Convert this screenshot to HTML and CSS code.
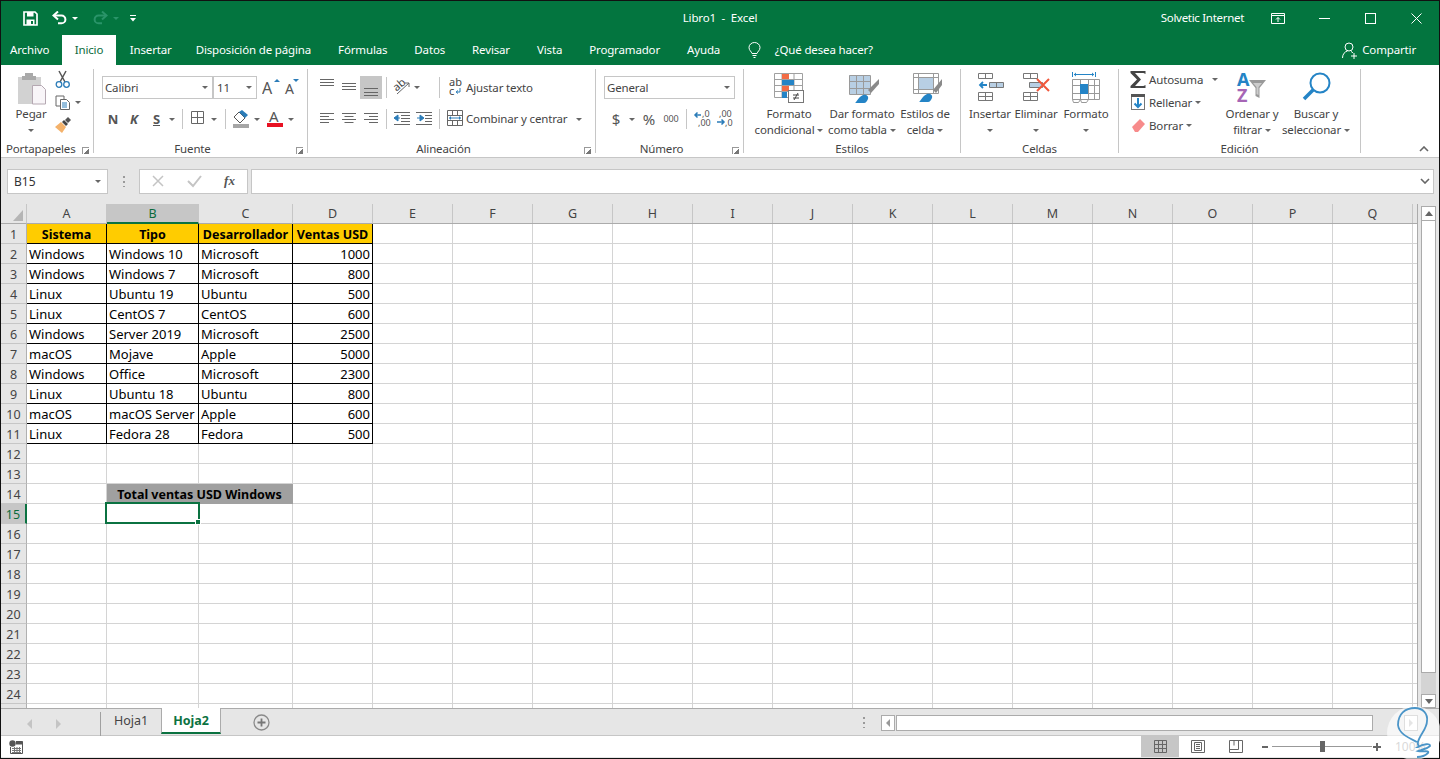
FILE: index.html
```html
<!DOCTYPE html>
<html lang="es">
<head>
<meta charset="utf-8">
<title>Libro1 - Excel</title>
<link rel="stylesheet" href="styles.css">
</head>
<body>
<div class="app">
  <header class="titlebar">
    <div class="qat">
      <svg width="15" height="15" viewBox="0 0 15 15"><path d="M1 1h11l2 2v11H1z" fill="none" stroke="#fff" stroke-width="1.7"/><rect x="4" y="1" width="6.5" height="4.5" fill="#fff"/><rect x="3.5" y="8.5" width="8" height="5.5" fill="#fff"/><rect x="8" y="10" width="2" height="3" fill="#03753f"/></svg>
      <svg class="q-undo" width="15" height="14" viewBox="0 0 15 14"><path d="M3 4.500h6.500a3.800 3.800 0 0 1 0 7.800H6" fill="none" stroke="#fff" stroke-width="2"/><path d="M6 .5 1.500 4.500 6 8.500" fill="none" stroke="#fff" stroke-width="2"/></svg>
      <i class="q-caret"></i>
      <svg class="q-redo" width="15" height="14" viewBox="0 0 15 14"><path d="M12 4.500H5.500a3.800 3.800 0 0 0 0 7.800H9" fill="none" stroke="#2a9469" stroke-width="2"/><path d="M9 .5l4.500 4-4.500 4" fill="none" stroke="#2a9469" stroke-width="2"/></svg>
      <i class="q-caret dim"></i>
      <svg class="q-more" width="6" height="7" viewBox="0 0 6 7"><rect width="6" height="1" fill="#fff"/><path d="M0 3h6L3 6.500z" fill="#fff"/></svg>
    </div>
    <div class="doc-title">Libro1 &nbsp;-&nbsp; Excel</div>
    <div class="win">
      <span class="user">Solvetic Internet</span>
      <span class="wb"><svg width="14" height="11" viewBox="0 0 14 11"><path d="M.5 2.500h13v8H.5zM.5.500h13v2H.5zM7 9V4.500M5 6.500l2-2 2 2" fill="none" stroke="#fff"/></svg></span>
      <span class="wb"><svg width="11" height="11" viewBox="0 0 11 11"><path d="M0 5.500h11" stroke="#fff"/></svg></span>
      <span class="wb"><svg width="11" height="11" viewBox="0 0 11 11"><rect x=".5" y=".5" width="10" height="10" fill="none" stroke="#fff"/></svg></span>
      <span class="wb"><svg width="11" height="11" viewBox="0 0 11 11"><path d="M.5.500l10 10M10.500.500l-10 10" stroke="#fff"/></svg></span>
    </div>
  </header>

  <nav class="tabs">
    <span class="tab first">Archivo</span>
    <span class="tab active">Inicio</span>
    <span class="tab">Insertar</span>
    <span class="tab">Disposición de página</span>
    <span class="tab">Fórmulas</span>
    <span class="tab">Datos</span>
    <span class="tab">Revisar</span>
    <span class="tab">Vista</span>
    <span class="tab">Programador</span>
    <span class="tab">Ayuda</span>
    <span class="tell">
      <svg width="13" height="16" viewBox="0 0 13 16"><path d="M4 11.500C3.500 9.500 1 8.500 1 5.500a5.500 5 0 0 1 11 0c0 3-2.500 4-3 6zM4.500 13.500h4M5.500 15.500h2" fill="none" stroke="#fff"/></svg>
      <span>¿Qué desea hacer?</span>
    </span>
    <span class="share">
      <svg width="16" height="17" viewBox="0 0 16 17"><circle cx="7" cy="5" r="4" fill="none" stroke="#fff"/><path d="M.5 16c0-4 2.500-6.500 5-7M9 9.500c.8.300 1.500.8 2 1.500M12 11v6M9 14h6" fill="none" stroke="#fff"/></svg>
      <span>Compartir</span>
    </span>
  </nav>

  <section class="ribbon">
    <div class="group g-clip">
      <div class="body row-body">
        <div class="big w-paste">
          <svg width="30" height="37" viewBox="0 0 30 37"><path d="M2 8h23v27H2z" fill="#d2d2d2"/><path d="M9 7V4h8v3h3v4H6V7z" fill="#a9a9a9"/><path d="M16.500 16.500h9l4 4v14.500h-13z" fill="#f8f5f8" stroke="#b5a8b2"/></svg>
          <span>Pegar</span>
          <i class="caret-solo"></i>
        </div>
        <div class="clip-tools">
          <svg width="18" height="18" viewBox="0 0 18 18"><path d="M5 1l6 11M12 1L6 12" stroke="#555" stroke-width="1.500" fill="none"/><circle cx="5" cy="14.500" r="2.800" fill="none" stroke="#2b7cb8" stroke-width="1.300"/><circle cx="12.500" cy="14.500" r="2.800" fill="none" stroke="#2b7cb8" stroke-width="1.300"/></svg>
          <span class="inline">
            <svg width="18" height="18" viewBox="0 0 18 18"><path d="M2 3h8v10H2z" fill="#fff" stroke="#666"/><path d="M6.500 6.500h6l3 3v7h-9z" fill="#fff" stroke="#666"/><path d="M8 10h5M8 12h5M8 14h5" stroke="#2b7cb8"/></svg>
            <i class="car c-copy"></i>
          </span>
          <svg width="18" height="18" viewBox="0 0 18 18"><path d="M10 4l4 4-2 2-4-4z" fill="#444"/><path d="M14 1l3 3-3 3-3-3z" fill="#555"/><path d="M7 6l5 5-4 6-7-6z" fill="#f4b26b"/></svg>
        </div>
      </div>
      <div class="label">Portapapeles<i class="launch"></i></div>
    </div>

    <div class="group g-font">
      <div class="body">
        <div class="r1">
          <span class="combo c-fname">Calibri<i class="car"></i></span>
          <span class="combo c-fsize">11<i class="car"></i></span>
          <svg class="grow" width="22" height="23" viewBox="0 0 22 23"><text x="0" y="18" class="svg-a">A</text><path d="M12 6l3-3 3 3z" fill="#2b7cb8"/></svg>
          <svg width="18" height="23" viewBox="0 0 18 23"><text x="1" y="18" class="svg-a small">A</text><path d="M9 3h6l-3 3z" fill="#2b7cb8"/></svg>
        </div>
        <div class="r2">
          <b class="fmt f-n">N</b><b class="fmt f-k">K</b><b class="fmt f-s">S</b><i class="car"></i>
          <i class="sep s-6"></i>
          <svg width="27" height="20" viewBox="0 0 27 20"><path d="M8.500 2.500h12v12h-12zM14.500 2.500v12M8.500 8.500h12" fill="none" stroke="#666"/></svg><i class="car"></i>
          <i class="sep s-7"></i>
          <svg width="27" height="20" viewBox="0 0 27 20"><path d="M8 8l5-5 6 6-5 5z" fill="#fff" stroke="#555"/><path d="M13 3l3-2 6 5-3 3z" fill="#2b7cb8"/><rect x="7" y="15" width="16" height="4" fill="#a6a6a6"/></svg><i class="car"></i>
          <svg width="26" height="20" viewBox="0 0 26 20"><text x="8" y="13" class="svg-a mid">A</text><rect x="6" y="14" width="16" height="4" fill="#e81123"/></svg><i class="car"></i>
        </div>
      </div>
      <div class="label launched">Fuente<i class="launch"></i></div>
    </div>

    <div class="group g-align">
      <div class="body">
        <div class="r1">
          <svg width="22" height="23" viewBox="0 0 22 23"><path d="M4 3.500h14M4 6.500h14M4 9.500h14" stroke="#666"/></svg>
          <svg width="22" height="23" viewBox="0 0 22 23"><path d="M4 7.500h14M4 10.500h14M4 13.500h14" stroke="#666"/></svg>
          <svg class="on" width="22" height="23" viewBox="0 0 22 23"><path d="M4 12.500h14M4 16.500h14M4 19.500h14" stroke="#666"/></svg>
          <i class="sep s-4 tall"></i>
          <svg width="26" height="23" viewBox="0 0 26 23"><text x="7" y="13" class="svg-ab" transform="rotate(-40 12 11)">ab</text><path d="M10 18L22 7M18 7h4v4" fill="none" stroke="#666"/></svg><i class="car"></i>
          <i class="sep s-18 tall"></i>
          <svg width="26" height="23" viewBox="0 0 26 23"><text x="9" y="10" class="svg-ab">ab</text><text x="9" y="19" class="svg-ab">c</text><path d="M20 12v4h-3M18 14.500l-2 1.500 2 1.500" fill="none" stroke="#2b7cb8"/></svg>
          <span class="txt">Ajustar texto</span>
        </div>
        <div class="r2">
          <svg width="22" height="20" viewBox="0 0 22 20"><path d="M4 4.500h14M4 7.500h9M4 10.500h14M4 13.500h9" stroke="#666"/></svg>
          <svg width="22" height="20" viewBox="0 0 22 20"><path d="M4 4.500h14M6.500 7.500h9M4 10.500h14M6.500 13.500h9" stroke="#666"/></svg>
          <svg width="22" height="20" viewBox="0 0 22 20"><path d="M4 4.500h14M9 7.500h9M4 10.500h14M9 13.500h9" stroke="#666"/></svg>
          <i class="sep s-4"></i>
          <svg width="29" height="20" viewBox="0 0 29 20"><path d="M7 3.500h16M14 6.500h9M14 9.500h9M14 12.500h9M7 15.500h16" stroke="#666"/><path d="M13 9H9M11 6L7 9l4 3z" fill="#2b7cb8" stroke="#2b7cb8"/></svg>
          <svg width="23" height="20" viewBox="0 0 23 20"><path d="M0 3.500h16M9 6.500h7M9 9.500h7M9 12.500h7M0 15.500h16" stroke="#666"/><path d="M1 9h4M4 6l4 3-4 3z" fill="#2b7cb8" stroke="#2b7cb8"/></svg>
          <i class="sep"></i>
          <svg width="26" height="20" viewBox="0 0 26 20"><path d="M7.500 1.500h15v15h-15zM7.500 6.500h15M7.500 11.500h15M12.500 1.500v5M17.500 1.500v5M12.500 11.500v5M17.500 11.500v5" fill="none" stroke="#666"/><path d="M9.500 9h11" stroke="#2b7cb8"/><path d="M9 9l2-2v4zM21 9l-2-2v4z" fill="#2b7cb8"/></svg>
          <span class="txt">Combinar y centrar</span><i class="car c-merge"></i>
        </div>
      </div>
      <div class="label launched">Alineación<i class="launch"></i></div>
    </div>

    <div class="group g-num">
      <div class="body">
        <div class="r1"><span class="combo c-general">General<i class="car"></i></span></div>
        <div class="r2">
          <span class="n-sym dollar">$</span><i class="car c-dollar"></i>
          <span class="n-sym pct">%</span>
          <span class="n-sym thou">000</span>
          <i class="sep s-6"></i>
          <svg width="29" height="20" viewBox="0 0 29 20"><path d="M14 6H8M10.500 3.500L8 6l2.500 2.500" fill="none" stroke="#2b7cb8" stroke-width="1.500"/><text x="15" y="8" class="svg-num">,0</text><text x="11" y="17" class="svg-num">,00</text></svg>
          <svg width="22" height="20" viewBox="0 0 22 20"><text x="3" y="8" class="svg-num">,00</text><path d="M1 13h7M5.500 10.500L8 13l-2.500 2.500" fill="none" stroke="#2b7cb8" stroke-width="1.500"/><text x="9" y="17" class="svg-num">,0</text></svg>
        </div>
      </div>
      <div class="label launched">Número<i class="launch"></i></div>
    </div>

    <div class="group g-styles">
      <div class="body row-body">
        <div class="big w-cond">
          <svg width="32" height="37" viewBox="0 0 32 37"><path d="M1.500 4.500h28v24h-28zM9 4.500v24M21 4.500v24M1.500 10.500h28M1.500 16.500h28M1.500 22.500h28" fill="none" stroke="#a0a0a0"/><rect x="9" y="5" width="7" height="5" fill="#f36c45"/><rect x="9" y="11" width="12" height="5" fill="#2484c6"/><rect x="9" y="17" width="7" height="5" fill="#f36c45"/><rect x="9" y="23" width="5" height="6" fill="#2484c6"/><rect x="15.500" y="21.500" width="15" height="12" fill="#fff" stroke="#777"/><path d="M20 26h6M20 29h6M25 24l-4 7" stroke="#444" fill="none"/></svg>
          <span>Formato</span><span>condicional<i class="tri"></i></span>
        </div>
        <div class="big w-table">
          <svg width="36" height="37" viewBox="-2 0 36 37"><rect x="3" y="6" width="21" height="19" fill="#b8cfe4"/><path d="M3.500 6.500h21v19h-21zM10.500 6.500v19M17.500 6.500v19M3.500 12.500h21M3.500 19.500h21" fill="none" stroke="#9a9a9a"/><path d="M33 10l-11 11 3 3 8-9z" fill="#8a8a8a"/><path d="M9 34c2-1 3-6 8-8 3-1 6 1 5 4-1 2-2 4-4 4z" fill="#2484c6"/></svg>
          <span>Dar formato</span><span>como tabla<i class="tri"></i></span>
        </div>
        <div class="big w-cell">
          <svg width="34" height="37" viewBox="-2 0 34 37"><path d="M3.500 4.500h25v20h-25z" fill="#fff" stroke="#9a9a9a"/><rect x="8" y="9" width="15" height="11" fill="#b8cfe4"/><path d="M8.500 4.500v20M23.500 4.500v20M3.500 8.500h25M3.500 20.500h25" fill="none" stroke="#9a9a9a"/><path d="M32 10l-9 11 3 3 6-8z" fill="#8a8a8a"/><path d="M9 33c2-1 3-6 8-8 3-1 6 1 5 4-1 2-2 4-4 4z" fill="#2484c6"/></svg>
          <span>Estilos de</span><span>celda<i class="tri"></i></span>
        </div>
      </div>
      <div class="label">Estilos</div>
    </div>

    <div class="group g-cells">
      <div class="body row-body">
        <div class="big w-ins">
          <svg width="30" height="37" viewBox="0 0 30 37"><path d="M3.500 4.500h14v5h-14zM10.500 4.500v5M3.500 23.500h14v8h-14zM10.500 23.500v8M3.500 27.500h14" fill="none" stroke="#777"/><path d="M14.500 13.500h14v5h-14zM21.500 13.500v5" fill="#b8cfe4" stroke="#777"/><path d="M12 16H5M8 13l-3 3 3 3" fill="none" stroke="#2484c6" stroke-width="1.800"/></svg>
          <span>Insertar</span><i class="caret-solo"></i>
        </div>
        <div class="big w-del">
          <svg width="34" height="37" viewBox="-2 0 34 37"><path d="M2.500 4.500h14v5h-14zM9.500 4.500v5M2.500 23.500h14v8h-14zM9.500 23.500v8M2.500 27.500h14" fill="none" stroke="#777"/><path d="M8.500 13.500h13v5h-13z" fill="#b8cfe4" stroke="#777"/><path d="M16 10l12 12M28 10L16 22" stroke="#f0583c" stroke-width="2"/></svg>
          <span>Eliminar</span><i class="caret-solo"></i>
        </div>
        <div class="big w-fmt">
          <svg width="30" height="37" viewBox="0 0 30 37"><path d="M1.500 3v5M24.500 3v5M3 5.500h20" stroke="#2484c6" fill="none"/><path d="M3 5.500l2-2v4zM23 5.500l-2-2v4z" fill="#2484c6"/><path d="M1.500 10.500h27v20h-27zM9.500 10.500v20M17.500 10.500v20M23.500 10.500v20M1.500 16.500h27M1.500 24.500h27" fill="none" stroke="#999"/><rect x="9" y="15" width="8" height="10" fill="#2484c6"/><path d="M1.500 30.500l1 3h5l2-3M9.500 30.500l1 3h5l2-3" fill="none" stroke="#999"/></svg>
          <span>Formato</span><i class="caret-solo"></i>
        </div>
      </div>
      <div class="label">Celdas</div>
    </div>

    <div class="group g-edit">
      <div class="body row-body">
        <div class="edit-list">
          <div class="edit-item">
            <svg width="19" height="23" viewBox="0 0 19 23"><path d="M.5 3h15v3L13.500 5H5l6 6.500L5 18h8.500l2-1v3H.5v-2l6.500-6.500L.5 5z" fill="#444"/></svg>
            <span>Autosuma</span><i class="tri tri-auto"></i>
          </div>
          <div class="edit-item">
            <svg width="19" height="23" viewBox="0 0 19 23"><rect x="1.500" y="3.500" width="13" height="15" fill="#fff" stroke="#777"/><rect x="1" y="3" width="14" height="3" fill="#555"/><path d="M8 7v9M4.500 12.500L8 16l3.500-3.500" fill="none" stroke="#2484c6" stroke-width="2"/></svg>
            <span>Rellenar</span><i class="tri"></i>
          </div>
          <div class="edit-item">
            <svg width="19" height="23" viewBox="0 0 19 23"><path d="M2 13l8-8 5 5-7 8H5z" fill="#f78b8b"/></svg>
            <span>Borrar</span><i class="tri"></i>
          </div>
        </div>
        <div class="big w-sort">
          <svg width="34" height="37" viewBox="0 0 34 37"><text x="2" y="17" class="svg-sort az">A</text><text x="2" y="33" class="svg-sort zz">Z</text><path d="M14 11h17l-6.500 8v10l-4-2v-8z" fill="#999"/><path d="M18 14h9l-3.500 4v8l-2-1v-7z" fill="#ccc"/></svg>
          <span>Ordenar y</span><span>filtrar<i class="tri"></i></span>
        </div>
        <div class="big w-find">
          <svg width="32" height="37" viewBox="0 0 32 37"><circle cx="20" cy="14" r="9.500" fill="none" stroke="#2484c6" stroke-width="2"/><path d="M13 21l-9 9" stroke="#2484c6" stroke-width="3.500"/></svg>
          <span>Buscar y</span><span>seleccionar<i class="tri"></i></span>
        </div>
      </div>
      <div class="label">Edición</div>
    </div>

    <svg class="collapse" width="10" height="6" viewBox="0 0 10 6"><path d="M1 5l4-4 4 4" fill="none" stroke="#666" stroke-width="1.600"/></svg>
  </section>

  <section class="fbar">
    <span class="namebox">B15<i class="car c-name"></i></span>
    <span class="dots"></span>
    <span class="fbtns">
      <svg width="36" height="22" viewBox="0 0 36 22"><path d="M13 6l10 10M23 6L13 16" stroke="#c4c4c4" stroke-width="1.500"/></svg>
      <svg width="36" height="22" viewBox="0 0 36 22"><path d="M12 11l5 5 8-10" fill="none" stroke="#c4c4c4" stroke-width="2"/></svg>
      <span class="fx">fx</span>
    </span>
    <span class="finput"><svg width="10" height="6" viewBox="0 0 10 6"><path d="M1 1l4 4 4-4" fill="none" stroke="#666" stroke-width="1.600"/></svg></span>
  </section>

  <section class="sheet">
    <div class="grid-wrap">
      <table class="grid">
        <colgroup><col class="c-rh"><col class="c-a"><col class="c-b"><col class="c-c"><col class="c-d"><col class="c-rest"></colgroup>
        <thead>
          <tr><th class="corner"><i></i></th><th>A</th><th class="sel">B</th><th>C</th><th>D</th><th class="head-rest"><span>E</span><span>F</span><span>G</span><span>H</span><span>I</span><span>J</span><span>K</span><span>L</span><span>M</span><span>N</span><span>O</span><span>P</span><span>Q</span><span class="stub"></span></th></tr>
        </thead>
        <tbody>
          <tr class="hd"><th>1</th><td>Sistema</td><td>Tipo</td><td>Desarrollador</td><td>Ventas USD</td><td class="rest"></td></tr>
          <tr class="bx"><th>2</th><td>Windows</td><td>Windows 10</td><td>Microsoft</td><td class="num">1000</td><td class="rest"></td></tr>
          <tr class="bx"><th>3</th><td>Windows</td><td>Windows 7</td><td>Microsoft</td><td class="num">800</td><td class="rest"></td></tr>
          <tr class="bx"><th>4</th><td>Linux</td><td>Ubuntu 19</td><td>Ubuntu</td><td class="num">500</td><td class="rest"></td></tr>
          <tr class="bx"><th>5</th><td>Linux</td><td>CentOS 7</td><td>CentOS</td><td class="num">600</td><td class="rest"></td></tr>
          <tr class="bx"><th>6</th><td>Windows</td><td>Server 2019</td><td>Microsoft</td><td class="num">2500</td><td class="rest"></td></tr>
          <tr class="bx"><th>7</th><td>macOS</td><td>Mojave</td><td>Apple</td><td class="num">5000</td><td class="rest"></td></tr>
          <tr class="bx"><th>8</th><td>Windows</td><td>Office</td><td>Microsoft</td><td class="num">2300</td><td class="rest"></td></tr>
          <tr class="bx"><th>9</th><td>Linux</td><td>Ubuntu 18</td><td>Ubuntu</td><td class="num">800</td><td class="rest"></td></tr>
          <tr class="bx"><th>10</th><td>macOS</td><td>macOS Server</td><td>Apple</td><td class="num">600</td><td class="rest"></td></tr>
          <tr class="bx"><th>11</th><td>Linux</td><td>Fedora 28</td><td>Fedora</td><td class="num">500</td><td class="rest"></td></tr>
          <tr><th>12</th><td></td><td></td><td></td><td></td><td class="rest"></td></tr>
          <tr><th>13</th><td></td><td></td><td></td><td></td><td class="rest"></td></tr>
          <tr><th>14</th><td></td><td class="total" colspan="2">Total ventas USD Windows</td><td></td><td class="rest"></td></tr>
          <tr class="cur"><th>15</th><td></td><td class="active-cell"><i class="selbox"></i></td><td></td><td></td><td class="rest"></td></tr>
          <tr><th>16</th><td></td><td></td><td></td><td></td><td class="rest"></td></tr>
          <tr><th>17</th><td></td><td></td><td></td><td></td><td class="rest"></td></tr>
          <tr><th>18</th><td></td><td></td><td></td><td></td><td class="rest"></td></tr>
          <tr><th>19</th><td></td><td></td><td></td><td></td><td class="rest"></td></tr>
          <tr><th>20</th><td></td><td></td><td></td><td></td><td class="rest"></td></tr>
          <tr><th>21</th><td></td><td></td><td></td><td></td><td class="rest"></td></tr>
          <tr><th>22</th><td></td><td></td><td></td><td></td><td class="rest"></td></tr>
          <tr><th>23</th><td></td><td></td><td></td><td></td><td class="rest"></td></tr>
          <tr><th>24</th><td></td><td></td><td></td><td></td><td class="rest"></td></tr>
          <tr><th></th><td></td><td></td><td></td><td></td><td class="rest"></td></tr>
        </tbody>
      </table>
    </div>
    <div class="vscroll">
      <span class="vbtn up"></span>
      <span class="vthumb"></span>
      <span class="vtrack"></span>
      <span class="vbtn down"></span>
    </div>
  </section>

  <section class="sheetbar">
    <div class="navs"><i class="nav-l"></i><i class="nav-r"></i></div>
    <span class="stab">Hoja1</span>
    <span class="stab on">Hoja2</span>
    <svg class="addsheet" width="17" height="17" viewBox="0 0 17 17"><circle cx="8.500" cy="8.500" r="7.500" fill="none" stroke="#8a8a8a" stroke-width="1.300"/><path d="M8.500 4.500v8M4.500 8.500h8" stroke="#777" stroke-width="1.800"/></svg>
    <div class="hzone">
      <span class="hdots"></span>
      <span class="hbtn"><i class="nav-l dark"></i></span>
      <span class="hthumb"></span>
      <span class="htrack"></span>
      <span class="hbtn"><i class="nav-r dark"></i></span>
    </div>
  </section>

  <footer class="status">
    <svg class="macro" width="14" height="14" viewBox="0 0 14 14"><circle cx="3.500" cy="3.500" r="3.200" fill="#555"/><path d="M7 1.500h6.500v12H1.500V7" fill="none" stroke="#555"/><path d="M7 1.500h6.500v3H7z" fill="#555"/><path d="M3 8.500h9M3 10.500h9M3 12.500h9M5.500 7v6M8 7v6M10.500 7v6" stroke="#777"/></svg>
    <div class="views">
      <span class="view on"><svg width="13" height="13" viewBox="0 0 13 13"><path d="M.5.500h12v12H.5zM4.500.500v12M8.500.500v12M.5 4.500h12M.5 8.500h12" fill="none" stroke="#666"/></svg></span>
      <span class="view"><svg width="14" height="13" viewBox="0 0 14 13"><path d="M.5.500h13v12H.5z" fill="none" stroke="#666"/><path d="M3.500 2.500h7v8h-7zM5 4.500h4M5 6.500h4M5 8.500h4" fill="none" stroke="#666"/></svg></span>
      <span class="view"><svg width="14" height="13" viewBox="0 0 14 13"><path d="M.5.500h13v12H.5zM.5 9.500h9v-9M5 .5v5" fill="none" stroke="#666"/></svg></span>
    </div>
    <div class="zoomer">
      <i class="zm"></i>
      <span class="slider"><i></i></span>
      <i class="zp"></i>
      <span class="pct-z">100%</span>
    </div>
  </footer>

  <svg class="logo" width="54" height="54" viewBox="0 0 54 54"><circle cx="27" cy="27" r="27" fill="#fff" fill-opacity=".62"/><path d="M30 36C22 32 12 28 11 19 11 8 18 2 28 2c8 0 13 6 12 13 0 8-7 13-9 21-1 3 2 5 0 5 5-3 13-4 12-1-3 3-10 4-12 5 5 1 12-1 10 2-3 3-7 4-11 4" fill="none" stroke="#4b95c8" stroke-width="1.800"/></svg>
</div>
</body>
</html>
```
FILE: styles.css
```css
* { box-sizing: border-box; }
html, body { margin: 0; padding: 0; }
body { width: 1440px; height: 759px; overflow: hidden; background: #000; font-family: "Noto Sans", "Open Sans", sans-serif; color: #444; }
i { font-style: normal; display: block; }
svg { display: block; flex: none; }
text { font-family: "Noto Sans", sans-serif; letter-spacing: 0; }

.app { position: relative; width: 1440px; height: 759px; padding: 1px; background: #e6e6e6; display: flex; flex-direction: column; overflow: hidden; box-shadow: inset 0 0 0 1px #111; }

/* title bar */
.titlebar { height: 34px; flex: none; background: #03753f; color: #fff; display: grid; grid-template-columns: 1fr auto 1fr; align-items: center; font-size: 11.5px; letter-spacing: -.15px; }
.qat { display: flex; align-items: center; padding-left: 22px; }
.q-undo { margin-left: 14px; }
.q-caret { width: 0; height: 0; border: 3px solid transparent; border-top-color: #fff; border-bottom: 0; margin-left: 5px; }
.q-caret.dim { border-top-color: #2a9469; margin-left: 5px; }
.q-redo { margin-left: 15px; }
.q-more { margin-left: 11px; }
.doc-title { text-align: center; padding-bottom: 2px; }
.win { display: flex; justify-content: flex-end; align-items: center; }
.user { margin-right: 11px; letter-spacing: -.3px; padding-bottom: 2px; }
.wb { width: 46px; display: flex; justify-content: center; }

/* tabs */
.tabs { height: 30px; flex: none; background: #03753f; color: #fff; display: flex; font-size: 11.5px; letter-spacing: -.15px; line-height: 30px; }
.tab { padding: 0 13.5px; white-space: nowrap; }
.tab.first { padding: 0 13px 0 9px; }
.tab.active { background: #fff; color: #0b6b3c; padding: 0 12.5px; }
.tab.active + .tab { padding-left: 14px; padding-right: 10.5px; }
.tell { display: flex; align-items: center; gap: 14px; margin-left: 14px; }
.share { display: flex; align-items: center; gap: 4px; margin-left: auto; margin-right: 23px; }

/* ribbon */
.ribbon { position: relative; height: 93px; flex: none; background: #fff; border-bottom: 1px solid #c6c6c6; display: flex; padding-top: 4px; font-size: 11.5px; letter-spacing: -.15px; line-height: 16px; }
.group { height: 84px; flex: none; border-right: 1px solid #c6c6c6; display: flex; flex-direction: column; }
.g-clip { width: 93px; } .g-font { width: 214px; } .g-align { width: 288px; } .g-num { width: 148px; } .g-styles { width: 217px; } .g-cells { width: 158px; } .g-edit { width: 242px; }
.body { height: 72px; flex: none; padding-top: 7px; }
.row-body { display: flex; padding-top: 0; }
.label { position: relative; height: 12px; line-height: 16px; text-align: center; white-space: nowrap; }
.label.launched { padding-right: 16px; }
.launch { position: absolute; right: 4px; top: 6px; width: 7px; height: 7px; border-left: 1px solid #999; border-top: 1px solid #999; background: linear-gradient(135deg, transparent 55%, #777 55%); }
.g-clip .label { text-align: left; padding-left: 5px; }

.r1 { height: 23px; display: flex; align-items: center; }
.r2 { height: 20px; margin-top: 10px; display: flex; align-items: center; }
.sep { width: 1px; height: 20px; background: #c6c6c6; flex: none; }
.sep.tall { height: 21px; }
.s-4 { margin-left: 4px; } .s-6 { margin-left: 6px; } .s-7 { margin-left: 7px; } .s-18 { margin-left: 18px; }
.car { width: 8px; height: 8px; flex: none; display: flex; align-items: center; justify-content: center; }
.car::before { content: ""; border: 3px solid transparent; border-top-color: #666; border-bottom: 0; }
.tri { display: inline-block; width: 0; height: 0; margin-left: 3px; vertical-align: middle; border: 3px solid transparent; border-top-color: #666; border-bottom: 0; }
.caret-solo { width: 0; height: 0; border: 3px solid transparent; border-top-color: #666; border-bottom: 0; margin-top: 7px; }
.txt { white-space: nowrap; }

.big { display: flex; flex-direction: column; align-items: center; flex: none; white-space: nowrap; }
.big span { height: 16px; }

.g-clip .body { padding-left: 13px; }
.w-paste { width: 34px; }
.clip-tools { display: flex; flex-direction: column; margin-left: 6px; padding-top: 1px; gap: 5px; }
.clip-tools .inline { display: flex; align-items: center; }
.c-copy { margin-left: 2px; }

.combo { height: 23px; border: 1px solid #c6c6c6; display: flex; align-items: center; justify-content: space-between; padding: 0 3px 0 2px; flex: none; }
.g-font .body { padding-left: 8px; }
.c-fname { width: 111px; }
.c-fsize { width: 44px; margin-left: 0; padding-left: 3px; }
.grow { margin-left: 5px; }
.svg-a { font-size: 16px; fill: #555; }
.svg-a.small { font-size: 14px; }
.svg-a.mid { font-size: 15px; }
.g-font .r2 { padding-left: 1px; }
.fmt { font-size: 13px; text-align: center; flex: none; color: #555; }
.f-n { width: 20px; } .f-k { width: 22px; font-style: italic; } .f-s { width: 23px; text-decoration: underline; }

.g-align .body { padding-left: 8px; }
.on { background: #c6c6c6; }
.svg-ab { font-size: 11px; fill: #444; }
.c-merge { margin-left: 8px; }

.g-num .body { padding-left: 8px; }
.c-general { width: 131px; }
.n-sym { flex: none; text-align: center; color: #555; }
.g-num .r2 { padding-left: 2px; }
.dollar { width: 20px; font-size: 15px; }
.c-dollar { margin-left: 2px; }
.pct { width: 26px; font-size: 15px; }
.thou { width: 18px; font-size: 9px; }
.svg-num { font-size: 9px; fill: #555; }

.g-styles .body { padding-left: 3px; }
.w-cond { width: 84px; } .w-table { width: 62px; } .w-cell { width: 64px; }
.g-cells .body { padding-left: 5px; }
.w-ins { width: 48px; } .w-del { width: 44px; } .w-fmt { width: 56px; }
.edit-list { width: 106px; padding-left: 11px; margin-top: -1px; flex: none; }
.edit-item { height: 23px; display: flex; align-items: center; }
.tri-auto { margin-left: 9px; }
.edit-item .tri { flex: none; }
.w-sort { width: 54px; } .w-find { width: 74px; }
.svg-sort { font-size: 18px; font-weight: 700; }
.az { fill: #2484c6; } .zz { fill: #a665b5; }
.collapse { position: absolute; right: 10px; bottom: 5px; }

/* formula bar */
.fbar { height: 46px; flex: none; display: flex; align-items: center; padding: 0 5px 0 6px; background: #e6e6e6; font-size: 12px; }
.namebox { width: 101px; height: 25px; background: #fff; border: 1px solid #c6c6c6; display: flex; align-items: center; justify-content: space-between; padding: 0 5px 0 6px; color: #333; flex: none; }
.dots { width: 2px; height: 11px; margin: 0 14px 0 15px; flex: none; background: repeating-linear-gradient(to bottom, #999 0 2px, transparent 2px 5px); }
.fbtns { width: 109px; height: 25px; background: #fff; border: 1px solid #c6c6c6; display: flex; align-items: center; flex: none; }
.fx { font-family: "Liberation Serif", serif; font-style: italic; font-weight: 700; font-size: 13px; width: 36px; text-align: center; color: #555; }
.finput { flex: 1; height: 25px; margin-left: 3px; background: #fff; border: 1px solid #c6c6c6; display: flex; align-items: center; justify-content: flex-end; padding-right: 3px; }

/* sheet */
.sheet { height: 504px; flex: none; display: flex; background: #e6e6e6; }
.grid-wrap { width: 1417px; height: 504px; flex: none; overflow: hidden; background: #fff; border-right: 1px solid #ababab; }
.grid { border-collapse: separate; border-spacing: 0; table-layout: fixed; width: 1416px; font-size: 13px; color: #000; }
.c-rh { width: 26px; } .c-a { width: 80px; } .c-b { width: 92px; } .c-c { width: 94px; } .c-d { width: 80px; } .c-rest { width: 1044px; }
.grid thead th { height: 20px; padding: 0; background: #e6e6e6; font-weight: 400; font-size: 12.5px; color: #444; border-right: 1px solid #c6c6c6; border-bottom: 1px solid #ababab; }
.grid thead .sel { background: #c6c6c6; border-bottom: 2px solid #0b7241; color: #0b6b3c; }
.corner { position: relative; }
.corner i { width: 0; height: 0; margin: 3px 3px 0 auto; border-left: 10px solid transparent; border-bottom: 11px solid #b5b5b5; }
.grid thead .head-rest { border-right: 0; padding: 0; }
.head-rest { display: flex; height: 20px; }
.head-rest span { width: 80px; height: 19px; line-height: 19px; border-right: 1px solid #c6c6c6; flex: none; }
.head-rest .stub { width: 4px; border-right: 0; }
.grid tbody th { height: 20px; padding: 2px 0 0; background: #e6e6e6; font-weight: 400; font-size: 12.5px; color: #444; border-right: 1px solid #b0b0b0; border-bottom: 1px solid #c6c6c6; line-height: 17px; }
.grid td { height: 20px; padding: 2px 2px 0; border-right: 1px solid #d4d4d4; border-bottom: 1px solid #d4d4d4; white-space: nowrap; overflow: hidden; line-height: 17px; }
.grid td.rest { padding: 0; border-right: 0; background: repeating-linear-gradient(to right, transparent 0 79px, #d4d4d4 79px 80px); }
.hd td, .bx td { border-right-color: #000; border-bottom-color: #000; }
.hd th, .bx th { border-right-color: #000; }
.hd td { background: #ffcc00; font-weight: 700; font-size: 12.5px; text-align: center; }
.grid .hd td.rest, .grid .bx td.rest { background: repeating-linear-gradient(to right, transparent 0 79px, #d4d4d4 79px 80px); border-bottom-color: #d4d4d4; }
.num { text-align: right; }
.grid td.total { background: #a0a0a0; font-weight: 700; font-size: 12.5px; text-align: center; border-right-color: #a0a0a0; border-bottom-color: #a0a0a0; }
.grid .cur th { background: #c6c6c6; border-right: 2px solid #0b7241; color: #0b6b3c; }
.grid td.active-cell { position: relative; overflow: visible; }
.selbox { position: absolute; left: -2px; top: -2px; right: -2px; bottom: -1px; border: 2px solid #0b7241; }
.selbox::after { content: ""; position: absolute; right: -3px; bottom: -3px; background: #0b7241; border: 1px solid #fff; box-sizing: content-box; width: 4px; height: 4px; }

.vscroll { flex: 1; display: flex; flex-direction: column; padding: 2px 3px 0 3px; }
.vbtn { height: 15px; background: #fff; border: 1px solid #ababab; flex: none; display: flex; align-items: center; justify-content: center; }
.vbtn.up::before { content: ""; border: 4px solid transparent; border-bottom: 5px solid #666; border-top: 0; }
.vbtn.down { height: 14px; }
.vbtn.down::before { content: ""; border: 4px solid transparent; border-top: 5px solid #666; border-bottom: 0; }
.vthumb { height: 452px; background: #fff; border: 1px solid #ababab; border-top: 0; flex: none; }
.vtrack { flex: 1; background: #d4d4d4; }

/* sheet tabs */
.sheetbar { height: 28px; flex: none; background: #e6e6e6; border-top: 1px solid #ababab; border-bottom: 1px solid #c6c6c6; display: flex; font-size: 12.5px; }
.navs { width: 100px; height: 24px; border-right: 1px solid #a0a0a0; margin-top: 3px; display: flex; align-items: center; padding-left: 26px; gap: 24px; flex: none; }
.nav-l { width: 0; height: 0; border: 5px solid transparent; border-left: 0; border-right: 5px solid #c4c4c4; }
.nav-r { width: 0; height: 0; border: 5px solid transparent; border-right: 0; border-left: 5px solid #c4c4c4; }
.nav-l.dark { border-right-color: #999; border-width: 4px 4px 4px 0; }
.nav-r.dark { border-left-color: #bbb; border-width: 4px 0 4px 4px; }
.stab { width: 60px; text-align: center; line-height: 24px; flex: none; }
.stab.on { height: 26px; margin-top: -1px; background: #fff; color: #0b7241; font-weight: 700; border-left: 1px solid #ababab; border-right: 1px solid #ababab; border-bottom: 2px solid #0b7241; line-height: 25px; }
.addsheet { margin: 5px 0 0 32px; }
.hzone { margin-left: auto; width: 579px; padding-right: 21px; display: flex; align-items: flex-start; padding-top: 6px; }
.hdots { width: 2px; height: 11px; margin: 2px 16px 0 3px; flex: none; background: repeating-linear-gradient(to bottom, #999 0 2px, transparent 2px 5px); }
.hbtn { width: 14px; height: 16px; background: #fff; border: 1px solid #ababab; display: flex; align-items: center; justify-content: center; flex: none; }
.hthumb { width: 477px; height: 16px; background: #fff; border: 1px solid #ababab; flex: none; margin-left: 1px; }
.htrack { flex: 1; }

/* status */
.status { height: 21px; flex: none; background: #fff; display: flex; align-items: center; padding-left: 8px; position: relative; }
.views { margin-left: auto; display: flex; height: 21px; }
.view { height: 21px; display: flex; align-items: center; justify-content: center; width: 38px; flex: none; }
.view.on { background: #c6c6c6; }
.zoomer { display: flex; align-items: center; width: 184px; flex: none; padding-left: 5px; font-size: 12px; color: #999; }
.zm { width: 6px; height: 2px; background: #666; flex: none; margin-left: 2px; }
.zp { width: 8px; height: 8px; flex: none; background: linear-gradient(#666,#666) center/100% 2px no-repeat, linear-gradient(#666,#666) center/2px 100% no-repeat; }
.slider { width: 100px; height: 1px; background: #999; margin: 0 1px 0 4px; position: relative; flex: none; }
.slider i { position: absolute; left: 48px; top: -5px; width: 5px; height: 11px; background: #666; }
.pct-z { margin-left: 14px; }
.logo { position: absolute; right: -1px; bottom: -1px; }
```
